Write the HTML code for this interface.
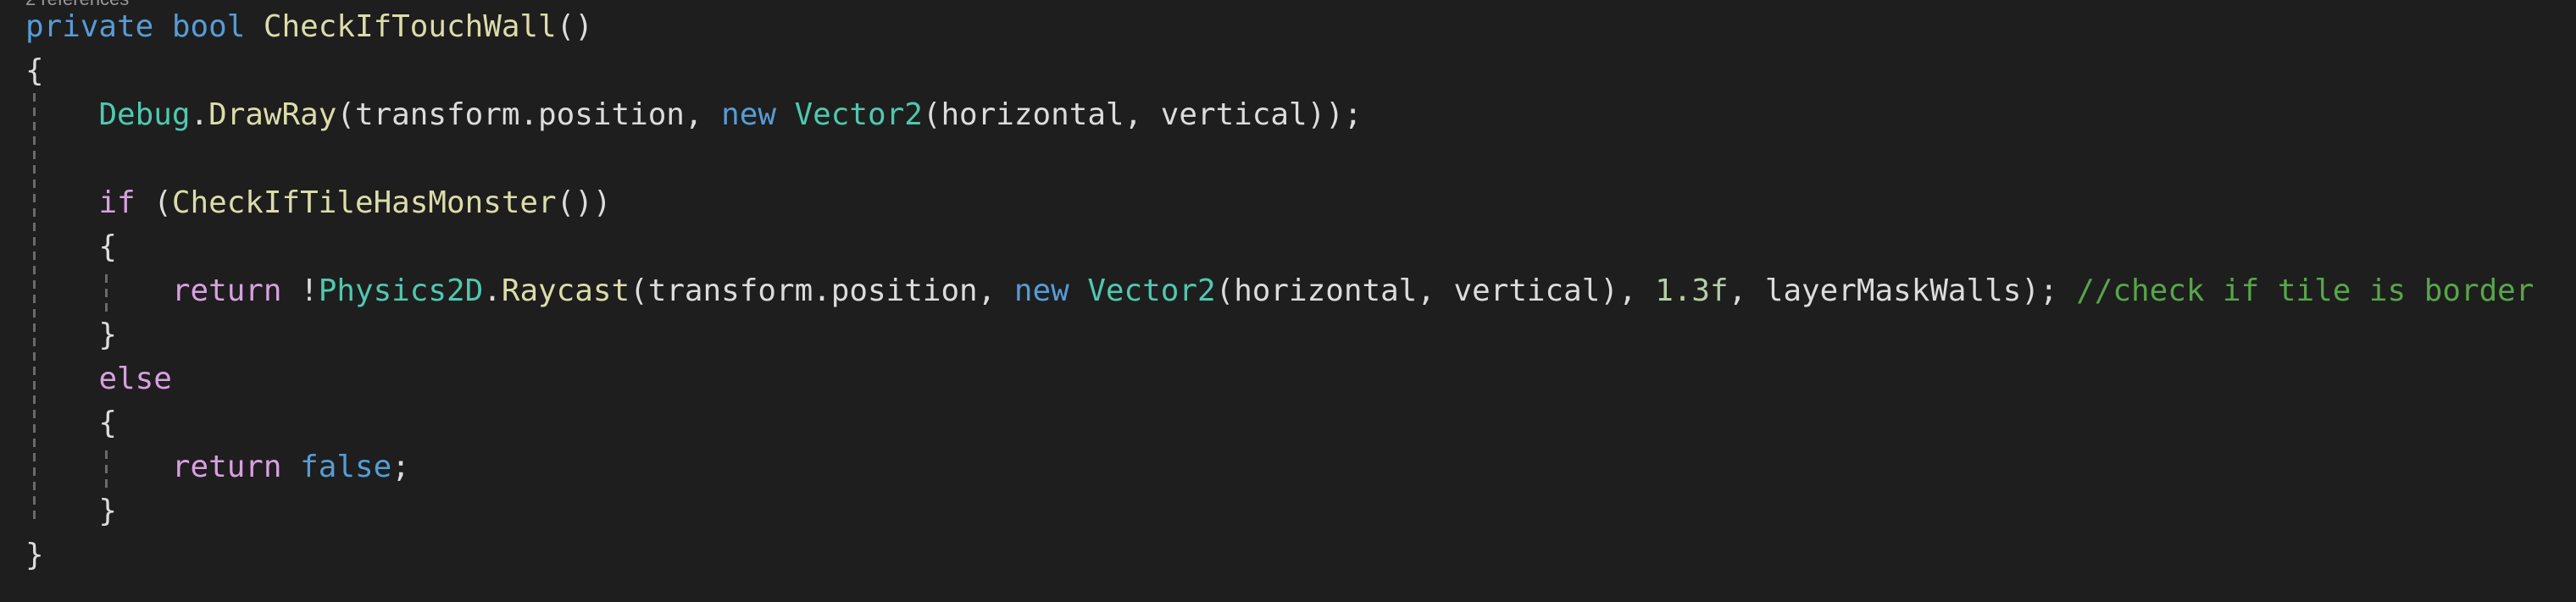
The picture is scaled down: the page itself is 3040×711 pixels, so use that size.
<!DOCTYPE html>
<html><head><style>
html,body{margin:0;padding:0;background:#1e1e1e;width:3040px;height:711px;overflow:hidden;position:relative}
pre{position:absolute;left:30px;top:6px;margin:0;font-family:"DejaVu Sans Mono","Liberation Mono",monospace;font-size:35.9px;line-height:52px;color:#dcdcdc;white-space:pre}
.k{color:#569cd6}.m{color:#dcdcaa}.t{color:#4ec9b0}.c{color:#d8a0df}.g{color:#57a64a}.n{color:#b5cea8}
.ref{position:absolute;left:30px;top:-14px;font-family:"Liberation Sans",sans-serif;font-size:22px;color:#999}
.guide{position:absolute;width:3px;background:repeating-linear-gradient(to bottom,#6a6a6a 0 10px,transparent 10px 17px)}
</style></head><body>
<div class="ref">2 references</div>
<div class="guide" style="left:39px;top:110px;height:508px"></div>
<div class="guide" style="left:124px;top:324px;height:46px"></div>
<div class="guide" style="left:124px;top:532px;height:46px"></div>
<pre><span class="k">private</span> <span class="k">bool</span> <span class="m">CheckIfTouchWall</span>()
{
    <span class="t">Debug</span>.<span class="m">DrawRay</span>(transform.position, <span class="k">new</span> <span class="t">Vector2</span>(horizontal, vertical));

    <span class="c">if</span> (<span class="m">CheckIfTileHasMonster</span>())
    {
        <span class="c">return</span> !<span class="t">Physics2D</span>.<span class="m">Raycast</span>(transform.position, <span class="k">new</span> <span class="t">Vector2</span>(horizontal, vertical), <span class="n">1.3f</span>, layerMaskWalls); <span class="g">//check if tile is border</span>
    }
    <span class="c">else</span>
    {
        <span class="c">return</span> <span class="k">false</span>;
    }
}</pre>
</body></html>
